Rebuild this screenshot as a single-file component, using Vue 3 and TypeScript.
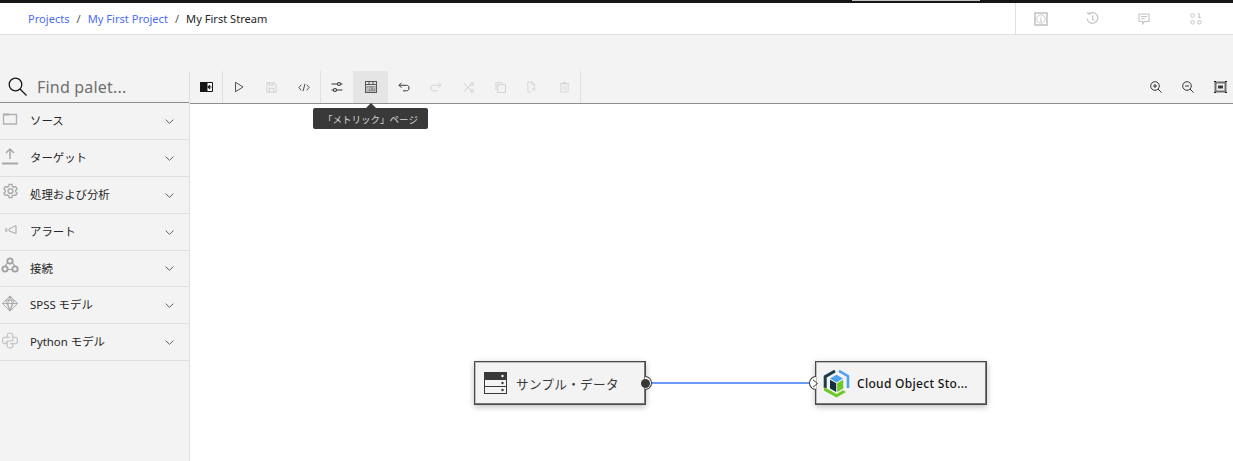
<script setup lang="ts">
const crumbs = [
  { label: 'Projects', link: true },
  { label: 'My First Project', link: true },
  { label: 'My First Stream', link: false },
]
const palette = ['ソース', 'ターゲット', '処理および分析', 'アラート', '接続', 'SPSS モデル', 'Python モデル']
</script>

<template>
  <div class="page">
    <header class="topbar">
      <span class="strip"></span>
      <nav class="crumbs">
        <template v-for="(c, i) in crumbs" :key="c.label">
          <span v-if="i" class="sep">/</span>
          <span :class="c.link ? 'link' : 'current'">{{ c.label }}</span>
        </template>
      </nav>
      <div class="top-icons">
        <span class="top-icon">
          <svg width="14" height="14" viewBox="0 0 14 14" fill="none" stroke="#c4c4c4"><rect x="1" y="1" width="12" height="12" stroke-width="1.600"/><circle cx="7" cy="7" r="4.200" stroke-width=".9"/><path d="M7 4.600v.9M6.200 6.500H7v2.700M6 9.300h2" stroke-width=".9"/></svg>
        </span>
        <span class="top-icon">
          <svg width="13" height="13" viewBox="0 0 13 13" fill="none" stroke="#c4c4c4" stroke-width="1.200"><path d="M2.400 2.600A5.300 5.300 0 1 1 1.200 6.500"/><path d="M.8 1.200h3v1.500M6.500 3.300v3.400l2 2"/></svg>
        </span>
        <span class="top-icon">
          <svg width="12" height="12" viewBox="0 0 12 12" fill="none" stroke="#c4c4c4" stroke-width="1.100"><path d="M1 1h10v7.500H6.300L4.500 11V8.500H1z"/><path d="M3 3.500h6M3 5.800h4"/></svg>
        </span>
        <span class="top-icon">
          <svg width="12" height="12" viewBox="0 0 12 12" fill="none" stroke="#c4c4c4" stroke-width="1"><circle cx="2.500" cy="2.500" r="1.800"/><path d="M7.800 .8h1.500v3.600M7.800 4.400h3.200"/><circle cx="2.500" cy="9.300" r="1.800"/><circle cx="9.300" cy="9.300" r="1.800"/></svg>
        </span>
      </div>
    </header>

    <div class="band"></div>

    <div class="workspace">
      <aside class="palette">
        <div class="search">
          <svg width="22" height="22" viewBox="0 0 22 22" fill="none" stroke="#161616" stroke-width="1.300"><circle cx="8.500" cy="8.500" r="6.300"/><path d="M13 13l6.500 6.500"/></svg>
          <span class="search-text">Find palet...</span>
        </div>
        <div v-for="(name, i) in palette" :key="name" class="cat" :class="{ short: i === 4 }">
          <span class="cat-icon" :class="'ci' + i">
            <svg v-if="i === 0" width="16" height="12" viewBox="0 0 16 12" fill="none" stroke="#b0b0b0" stroke-width="1.300"><path d="M1.500 1.500h13v9.500h-13z"/><path d="M1 1.500h6" stroke-width="2"/></svg>
            <svg v-else-if="i === 1" width="18" height="18" viewBox="0 0 18 18" fill="none" stroke="#a8a8a8" stroke-width="1.500"><path d="M9 12V2M5 6l4-4 4 4"/><path d="M1 16.500h16" stroke-width="2"/></svg>
            <svg v-else-if="i === 2" width="17" height="17" viewBox="0 0 18 18" fill="none" stroke="#a8a8a8" stroke-width="1.400"><path d="M7.500 1.500h3l.4 2 1.700.9 1.900-.7 1.500 2.600-1.500 1.300v1.800l1.500 1.300-1.500 2.600-1.900-.7-1.700.9-.4 2h-3l-.4-2-1.700-.9-1.900.7-1.500-2.600 1.500-1.300V7.600L2 6.300l1.500-2.600 1.900.7 1.700-.9z"/><circle cx="9" cy="8.500" r="2.600"/></svg>
            <svg v-else-if="i === 3" width="18" height="12" viewBox="0 0 18 12" fill="none" stroke="#a8a8a8" stroke-width="1"><path d="M8 5 15 1.500v8L8 7z"/><path d="M4 5h2.500M4 6.800h2.500" stroke-width="1.200"/></svg>
            <svg v-else-if="i === 4" width="18" height="16" viewBox="0 0 18 16" fill="none" stroke="#a0a0a0" stroke-width="1.800"><circle cx="9" cy="4" r="2.700"/><circle cx="4" cy="12" r="2.700"/><circle cx="14" cy="12" r="2.700"/><path d="M6.300 6 4.300 9M11.700 6l2 3M7 12.500h4" stroke-width="1.200"/></svg>
            <svg v-else-if="i === 5" width="18" height="17" viewBox="0 0 18 18" fill="none" stroke="#a8a8a8" stroke-width="1"><path d="M9 1 17 9l-8 8-8-8z"/><path d="M4.500 5.500h9M1 9h16M4.500 5.500 9 17l4.500-11.500M9 1 6.500 9 9 17l2.500-8z"/></svg>
            <svg v-else width="18" height="17" viewBox="0 0 18 18" fill="none" stroke="#c0c0c0" stroke-width="1.200"><path d="M6 6.500V3.500C6 2 7.500 1 9 1s3 1 3 2.500V8c0 1-1 1.500-2 1.500H7C5.500 9.500 5 10.500 5 11.500v1H3.500C2 12.500 1 11 1 9s1-3.500 2.500-3.500H9"/><path d="M12 11.500v3c0 1.500-1.500 2.500-3 2.500s-3-1-3-2.500V10M13 6v-.5h1.500C16 5.500 17 7 17 9s-1 3.500-2.500 3.500H9"/></svg>
          </span>
          <span class="cat-name">{{ name }}</span>
          <svg class="chev" width="9" height="5" viewBox="0 0 9 5" fill="none" stroke="#525252" stroke-width=".9"><path d="M.6.6 4.500 4.300 8.400.6"/></svg>
        </div>
      </aside>

      <main class="canvas-area">
        <div class="toolbar">
          <div class="tools">
            <span class="tool">
              <svg width="13" height="10" viewBox="0 0 13 10"><path d="M.5.500h12v9H.5z" fill="#fff" stroke="#161616"/><path d="M0 0h7.500v10H0z" fill="#161616"/><path d="M11.500 5H8.500M10 3.200 8.200 5 10 6.800" fill="none" stroke="#161616" stroke-width="1.200"/></svg>
            </span>
            <span class="divider"></span>
            <span class="tool">
              <svg width="12" height="12" viewBox="0 0 12 12" fill="none" stroke="#525252" stroke-width="1"><path d="M2.500 1.300v9.400l7.500-4.700z"/></svg>
            </span>
            <span class="tool">
              <svg width="11" height="11" viewBox="0 0 12 12" fill="none" stroke="#d4d4d4" stroke-width="1.200"><path d="M1 1h8l2 2v8H1z"/><path d="M3.500 11V7h5v4M3.500 1v2.500h4V1"/></svg>
            </span>
            <span class="tool wide">
              <svg width="12" height="9" viewBox="0 0 13 10" fill="none" stroke="#393939" stroke-width="1"><path d="M3.500 2 .8 5l2.700 3M9.500 2l2.700 3-2.700 3M7.500 1 5.500 9"/></svg>
            </span>
            <span class="divider"></span>
            <span class="tool">
              <svg width="12" height="12" viewBox="0 0 12 12" fill="none" stroke="#393939" stroke-width="1.100"><path d="M.5 3h6M9.500 3h2M.5 9h2M5.500 9h6"/><circle cx="8" cy="3" r="1.500"/><circle cx="4" cy="9" r="1.500"/></svg>
            </span>
            <span class="tool active">
              <svg width="12" height="12" viewBox="0 0 12 12" fill="none" stroke="#555" stroke-width="1"><rect x=".5" y=".5" width="11" height="11"/><path d="M.5 3.500h11M4 .5v3M8 .5v3"/><path d="M1.500 5h9v5.500h-9z" fill="#8a8a8a" stroke="none"/><path d="M2.500 6.200h1.500v1.500H2.500v1.500h1.500M5.700 6.200v3M7.500 6.200H9.500L8 9.200" stroke="#e8e8e8" stroke-width=".7"/></svg>
            </span>
            <span class="tool">
              <svg width="12" height="10" viewBox="0 0 12 10" fill="none" stroke="#393939" stroke-width="1"><path d="M3.500 .8 1 3.300l2.500 2.500M1 3.300h7.500c1.500 0 2.500 1 2.500 2.700S10 8.800 8.500 8.800H5"/></svg>
            </span>
            <span class="tool">
              <svg width="12" height="10" viewBox="0 0 12 10" fill="none" stroke="#d4d4d4" stroke-width="1"><path d="M8.500 .8 11 3.300 8.500 5.800M11 3.300H3.500C2 3.300 1 4.300 1 6s1 2.800 2.500 2.800H7"/></svg>
            </span>
            <span class="tool">
              <svg width="11" height="11" viewBox="0 0 13 13" fill="none" stroke="#c8c8c8" stroke-width="1"><circle cx="10.500" cy="2.500" r="1.700"/><circle cx="10.500" cy="10.500" r="1.700"/><path d="M1 1.500 9 9.200M9 3.800 1 11.500"/></svg>
            </span>
            <span class="tool">
              <svg width="11" height="11" viewBox="0 0 12 12" fill="none" stroke="#d4d4d4" stroke-width="1.100"><rect x="3" y="3" width="8.500" height="8.500"/><path d="M1 9V.8h7.500"/></svg>
            </span>
            <span class="tool">
              <svg width="10" height="12" viewBox="0 0 12 14" fill="none" stroke="#d4d4d4" stroke-width="1.100"><path d="M5 13H1V1h5l3 3v3M6 1v3h3M11 9.500H6.500M8.500 7.500l-2 2 2 2"/></svg>
            </span>
            <span class="tool">
              <svg width="9" height="12" viewBox="0 0 11 13" fill="none" stroke="#d4d4d4" stroke-width="1.100"><rect x="1" y="2.500" width="9" height="10"/><path d="M0 2.500h11M4 2.500V.8h3v1.700M4 5v5M7 5v5"/></svg>
            </span>
            <span class="divider"></span>
          </div>
          <div class="zooms">
            <span class="zoom">
              <svg width="12" height="12" viewBox="0 0 12 12" fill="none" stroke="#393939" stroke-width="1"><circle cx="5" cy="5" r="4.300"/><path d="M8 8 11.500 11.500M3 5h4M5 3v4"/></svg>
            </span>
            <span class="zoom">
              <svg width="12" height="12" viewBox="0 0 12 12" fill="none" stroke="#393939" stroke-width="1"><circle cx="5" cy="5" r="4.300"/><path d="M8 8 11.500 11.500M3 5h4"/></svg>
            </span>
            <span class="zoom">
              <svg width="13" height="12" viewBox="0 0 13 12" fill="none"><rect x="1.500" y="1.500" width="10" height="9" stroke="#6f6f6f" stroke-width="2"/><rect x="4" y="4.500" width="5" height="3" fill="#393939"/><path d="M0 .5h2M11 .5h2M0 11.500h2M11 11.500h2" stroke="#161616"/></svg>
            </span>
          </div>
        </div>

        <div class="canvas">
          <div class="tooltip">
            <span class="tooltip-arrow"></span>
            「メトリック」ページ
          </div>

          <div class="flow">
            <div class="node">
              <svg class="node-icon" width="23" height="22" viewBox="0 0 23 22"><rect x=".5" y=".5" width="22" height="7" fill="#393939" stroke="#393939"/><rect x=".5" y="7.500" width="22" height="7" fill="none" stroke="#393939"/><rect x=".5" y="14.500" width="22" height="7" fill="none" stroke="#393939"/><circle cx="18.500" cy="4" r="1.200" fill="#fff"/><circle cx="18.500" cy="11" r="1.200" fill="#393939"/><circle cx="18.500" cy="18" r="1.200" fill="#393939"/></svg>
              <span class="node-label">サンプル・データ</span>
              <span class="port out"></span>
              <span class="port-dot"></span>
            </div>
            <div class="link-line"></div>
            <div class="node target">
              <span class="port in"></span>
              <svg class="port-chev" width="7" height="9" viewBox="0 0 7 9" fill="none" stroke="#393939" stroke-width="1"><path d="M1 .8 5.500 4.500 1 8.200"/></svg>
              <svg class="node-icon" width="27" height="29" viewBox="0 0 27 29">
                <path d="M12 2 2.200 7.700V19" fill="none" stroke="#1f3a4a" stroke-width="3"/>
                <path d="M16 1.800 25 7.200V19" fill="none" stroke="#4fa3ee" stroke-width="2.600"/>
                <path d="M1 18.500V21.500l12.500 7L23 23l-3-1.800-6.500 3.800L2 18.500z" fill="#6dc924"/>
                <path d="M7 10.800 13.200 14.300V23L7 19.500z" fill="#15303f"/>
                <path d="M13.500 5.800 7 9.600l6.500 3.800L20 9.600z" fill="#4fa3ee"/>
                <path d="M14.200 14.300V23l6-3.500v-8.700z" fill="#6dc924"/>
              </svg>
              <span class="node-label strong">Cloud Object Sto...</span>
            </div>
          </div>
        </div>
      </main>
    </div>
  </div>
</template>

<style>
html, body { margin: 0; background: #fff; }
</style>

<style scoped>
.page {
  width: 1233px;
  height: 461px;
  overflow: hidden;
  display: flex;
  flex-direction: column;
  font-family: "Noto Sans", "Noto Sans CJK JP", sans-serif;
  color: #262626;
  background: #fff;
}
.topbar {
  height: 31px;
  border-top: 3px solid #161616;
  border-bottom: 1px solid #e0e0e0;
  background: #fff;
  display: flex;
  align-items: stretch;
  justify-content: space-between;
  flex: none;
  position: relative;
}
.strip {
  position: absolute;
  left: 852px;
  top: -3px;
  width: 128px;
  height: 1px;
  background: #c6c6c6;
}
.crumbs {
  padding-left: 28px;
  display: flex;
  align-items: center;
  gap: 7px;
  font-size: 11.1px;
}
.link { color: #4a6cf7; }
.current { color: #262626; }
.sep { color: #525252; }
.top-icons {
  border-left: 1px solid #e0e0e0;
  display: flex;
  align-items: center;
  width: 218px;
  box-sizing: border-box;
  padding-left: 18px;
  gap: 37.5px;
}
.top-icon { display: flex; width: 14px; height: 14px; align-items: center; justify-content: center; }
.band { height: 36px; background: #f3f3f3; flex: none; }
.workspace { flex: 1; display: flex; min-height: 0; }
.palette {
  width: 190px;
  box-sizing: border-box;
  flex: none;
  background: #f3f3f3;
  border-right: 1px solid #e0e0e0;
}
.search {
  height: 31px;
  display: flex;
  align-items: center;
  padding-left: 7px;
  gap: 8px;
  border-bottom: 1px solid #8d8d8d;
}
.search-text {
  font-size: 16px;
  color: #6f6f6f;
  letter-spacing: .2px;
}
.cat {
  height: 36px;
  border-bottom: 1px solid #e0e0e0;
  display: flex;
  align-items: center;
}
.cat.short { height: 35px; }
.cat-icon {
  width: 30px;
  flex: none;
  display: flex;
  padding-left: 1px;
  box-sizing: border-box;
  margin-top: -5px;
}
.ci0 { padding-left: 2px; }
.ci2 { padding-left: 2px; margin-top: -7px; }
.ci4 { margin-top: -8px; }
.ci5, .ci6 { margin-top: -3px; }
.cat-name { font-size: 11.4px; flex: 1; color: #262626; margin-top: -2px; }
.chev { margin-right: 15px; }
.canvas-area { flex: 1; display: flex; flex-direction: column; min-width: 0; }
.toolbar {
  height: 32px;
  flex: none;
  background: #f3f3f3;
  border-bottom: 1px solid #8d8d8d;
  display: flex;
  justify-content: space-between;
}
.tools { display: flex; align-items: stretch; }
.tool {
  width: 32px;
  display: flex;
  align-items: center;
  justify-content: center;
}
.tool.wide { width: 33px; }
.tool.active { background: #e5e5e5; width: 35px; }
.divider { width: 1px; background: #e0e0e0; }
.zooms { display: flex; align-items: center; padding-right: 6px; gap: 18px; }
.zoom { display: flex; width: 14px; justify-content: center; }
.canvas { flex: 1; position: relative; background: #fff; }
.tooltip {
  position: absolute;
  left: 123px;
  top: 4px;
  width: 115px;
  height: 21px;
  background: #393939;
  color: #d6d6d6;
  border-radius: 2px;
  font-size: 9.5px;
  display: flex;
  align-items: center;
  justify-content: center;
  box-sizing: border-box;
}
.tooltip-arrow {
  position: absolute;
  left: 53px;
  top: -5px;
  border-left: 5px solid transparent;
  border-right: 5px solid transparent;
  border-bottom: 5px solid #393939;
}
.flow {
  position: absolute;
  left: 284px;
  top: 257px;
  display: flex;
  align-items: center;
}
.node {
  width: 172px;
  height: 44px;
  box-sizing: border-box;
  border: 1px solid #4a4a4a;
  background: #f3f3f3;
  box-shadow: inset -1px -1px 0 #777, inset 1px 1px 0 #bdbdbd, 0 2px 6px rgba(0,0,0,.25);
  display: flex;
  align-items: center;
  position: relative;
  padding-left: 9px;
}
.node-icon { flex: none; }
.node-label { margin-left: 9px; font-size: 12.6px; color: #393939; letter-spacing: .3px; }
.node-label.strong { font-weight: 500; margin-left: 7px; font-size: 12px; letter-spacing: .3px; color: #161616; }
.target { padding-left: 7px; }
.link-line { width: 169px; height: 2px; background: #6b9bf8; }
.port {
  position: absolute;
  top: 50%;
  width: 7px;
  height: 14px;
  margin-top: -7px;
  background: #fff;
  border: 1px solid #393939;
  box-sizing: border-box;
}
.port.out { right: -7px; border-left: 0; border-radius: 0 7px 7px 0; }
.port.in { left: -7px; border-right: 0; border-radius: 7px 0 0 7px; }
.port-dot {
  position: absolute;
  right: -5px;
  top: 50%;
  margin-top: -4.5px;
  width: 9px;
  height: 9px;
  border-radius: 50%;
  background: #393939;
}
.port-chev { position: absolute; left: -4px; top: 50%; margin-top: -4.5px; }
</style>
